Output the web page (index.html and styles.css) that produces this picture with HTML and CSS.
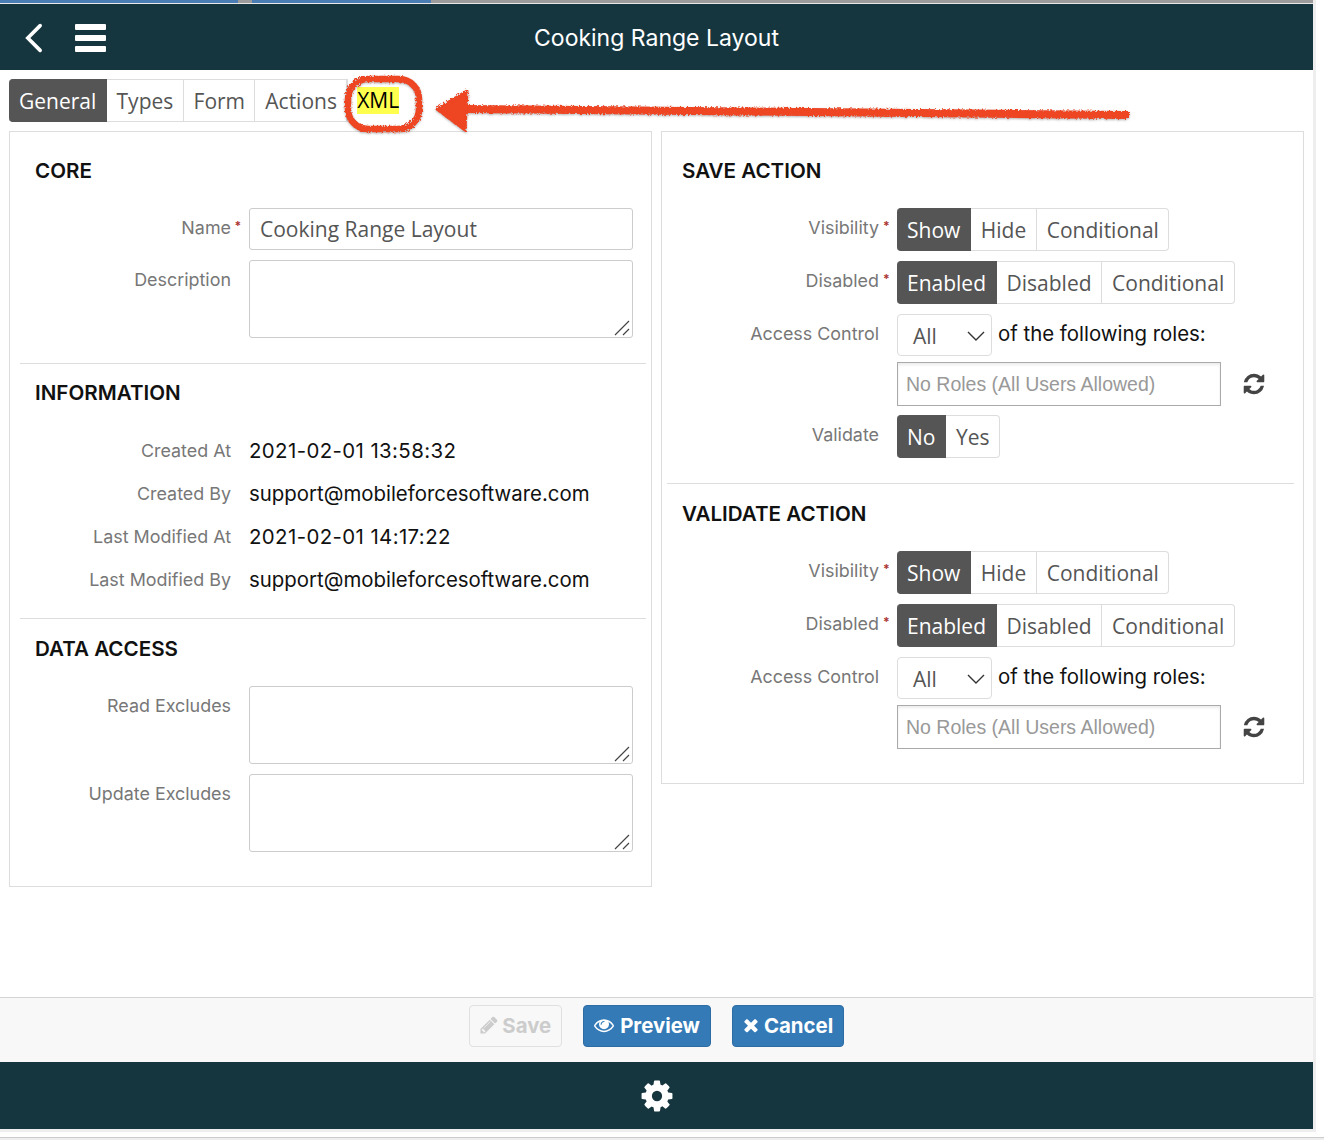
FILE: index.html
```html
<!DOCTYPE html>
<html lang="en">
<head>
    <meta charset="UTF-8">
    <title>Cooking Range Layout</title>
    <link rel="stylesheet" href="styles.css">
</head>
<body>
    <svg class="sprite" width="0" height="0">
        <defs>
            <symbol id="iconCog" viewBox="0 0 1792 1792"><path d="M1152 896q0-106-75-181t-181-75-181 75-75 181 75 181 181 75 181-75 75-181zm512-109v222q0 12-8 23t-20 13l-185 28q-19 54-39 91 35 50 107 138 10 12 10 25t-9 23q-27 37-99 108t-94 71q-12 0-26-9l-138-108q-44 23-91 38-16 136-29 186-7 28-36 28h-222q-14 0-24.500-8.500t-11.500-21.500l-28-184q-49-16-90-37l-141 107q-10 9-25 9-14 0-25-11-126-114-165-168-7-10-7-23 0-12 8-23 15-21 51-66.500t54-70.500q-27-50-41-99l-183-27q-13-2-21-12.500t-8-23.500v-222q0-12 8-23t19-13l186-28q14-46 39-92-40-57-107-138-10-12-10-24 0-10 9-23 26-36 98.500-107.500t94.500-71.500q13 0 26 10l138 107q44-23 91-38 16-136 29-186 7-28 36-28h222q14 0 24.500 8.500t11.500 21.500l28 184q49 16 90 37l142-107q9-9 24-9 13 0 25 10 129 119 165 170 7 8 7 22 0 12-8 23-15 21-51 66.500t-54 70.500q26 50 41 98l183 28q13 2 21 12.500t8 23.500z"/></symbol>
            <symbol id="iconRefresh" viewBox="0 0 1792 1792"><path d="M1639 1056q0 5-1 7-64 268-268 434.500t-478 166.500q-146 0-282.500-55t-243.500-157l-129 129q-19 19-45 19t-45-19-19-45v-448q0-26 19-45t45-19h448q26 0 45 19t19 45-19 45l-137 137q71 66 161 102t187 36q134 0 250-65t186-179q11-17 53-117 8-23 30-23h192q13 0 22.500 9.500t9.500 22.500zm25-800v448q0 26-19 45t-45 19h-448q-26 0-45-19t-19-45 19-45l138-138q-148-137-349-137-134 0-250 65t-186 179q-11 17-53 117-8 23-30 23h-199q-13 0-22.500-9.500t-9.500-22.500v-7q65-268 270-434.500t480-166.500q146 0 284 55.500t245 156.500l130-129q19-19 45-19t45 19 19 45z"/></symbol>
            <symbol id="iconPencil" viewBox="0 0 1792 1792"><path d="M491 1536l91-91-235-235-91 91v107h128v128h107zm523-928q0-22-22-22-10 0-17 7l-542 542q-7 7-7 17 0 22 22 22 10 0 17-7l542-542q7-7 7-17zm-54-192l416 416-832 832h-416v-416zm683 96q0 53-37 90l-166 166-416-416 166-165q36-38 90-38 53 0 91 38l235 234q37 39 37 91z"/></symbol>
            <symbol id="iconEye" viewBox="0 0 1792 1792"><path d="M1664 960q-152-236-381-353 61 104 61 225 0 185-131.500 316.500t-316.500 131.500-316.500-131.500-131.500-316.500q0-121 61-225-229 117-381 353 133 205 333.500 326.500t434.500 121.500 434.500-121.500 333.500-326.500zm-720-384q0-20-14-34t-34-14q-125 0-214.500 89.500t-89.500 214.500q0 20 14 34t34 14 34-14 14-34q0-86 61-147t147-61q20 0 34-14t14-34zm848 384q0 34-20 69-140 230-376.500 368.500t-499.500 138.500-499.500-139-376.500-368q-20-35-20-69t20-69q140-229 376.500-368t499.500-139 499.500 139 376.500 368q20 35 20 69z"/></symbol>
            <symbol id="iconTimes" viewBox="0 0 1792 1792"><path d="M1490 1322q0 40-28 68l-136 136q-28 28-68 28t-68-28l-294-294-294 294q-28 28-68 28t-68-28l-136-136q-28-28-28-68t28-68l294-294-294-294q-28-28-28-68t28-68l136-136q28-28 68-28t68 28l294 294 294-294q28-28 68-28t68 28l136 136q28 28 28 68t-28 68l-294 294 294 294q28 28 28 68z"/></symbol>
            <symbol id="iconChevron" viewBox="0 0 18 10"><path d="M1 1l8 8 8-8" fill="none" stroke="#333" stroke-width="1.4"/></symbol>
            <symbol id="iconGrip" viewBox="0 0 16 16"><path d="M1 15L15 1M9 15l6-6" fill="none" stroke="#444" stroke-width="1.2"/></symbol>
        </defs>
    </svg>

    <div class="app">
        <div class="browserStrip">
            <span class="stripTab stripTabFirst"></span>
            <span class="stripTab stripTabSecond"></span>
        </div>

        <!-- Top bar -->
        <header class="topBar">
            <div class="topBarIcons">
                <svg class="backIcon" viewBox="0 0 20 32"><path d="M17 3L4 16l13 13" fill="none" stroke="#fff" stroke-width="3.8" stroke-linecap="round"/></svg>
                <div class="burger"><span></span><span></span><span></span></div>
            </div>
            <h1 class="pageTitle">Cooking Range Layout</h1>
        </header>

        <!-- Tabs -->
        <nav class="tabs">
            <button type="button" class="tab tabActive">General</button>
            <button type="button" class="tab">Types</button>
            <button type="button" class="tab">Form</button>
            <button type="button" class="tab">Actions</button>
            <button type="button" class="tab tabXml"><mark class="xmlMark">XML</mark></button>
        </nav>

        <main class="columns">
            <!-- Left panel -->
            <div class="panel panelLeft">
                <section class="section sectionCore">
                    <h2 class="sectionTitle">CORE</h2>
                    <div class="row rowName">
                        <label class="rowLabel required">Name</label>
                        <input type="text" class="textField" value="Cooking Range Layout">
                    </div>
                    <div class="row">
                        <label class="rowLabel">Description</label>
                        <div class="areaWrap">
                            <textarea class="textArea"></textarea>
                            <svg class="areaGrip"><use href="#iconGrip"/></svg>
                        </div>
                    </div>
                </section>

                <section class="section sectionInfo">
                    <h2 class="sectionTitle">INFORMATION</h2>
                    <div class="row rowInfo">
                        <label class="rowLabel">Created At</label>
                        <span class="infoValue infoDate">2021-02-01 13:58:32</span>
                    </div>
                    <div class="row rowInfo">
                        <label class="rowLabel">Created By</label>
                        <span class="infoValue">support@mobileforcesoftware.com</span>
                    </div>
                    <div class="row rowInfo">
                        <label class="rowLabel">Last Modified At</label>
                        <span class="infoValue infoDate">2021-02-01 14:17:22</span>
                    </div>
                    <div class="row rowInfo">
                        <label class="rowLabel">Last Modified By</label>
                        <span class="infoValue">support@mobileforcesoftware.com</span>
                    </div>
                </section>

                <section class="section sectionData">
                    <h2 class="sectionTitle">DATA ACCESS</h2>
                    <div class="row rowArea">
                        <label class="rowLabel">Read Excludes</label>
                        <div class="areaWrap">
                            <textarea class="textArea"></textarea>
                            <svg class="areaGrip"><use href="#iconGrip"/></svg>
                        </div>
                    </div>
                    <div class="row">
                        <label class="rowLabel">Update Excludes</label>
                        <div class="areaWrap">
                            <textarea class="textArea"></textarea>
                            <svg class="areaGrip"><use href="#iconGrip"/></svg>
                        </div>
                    </div>
                </section>
            </div>

            <!-- Right panel -->
            <div class="panel panelRight">
                <section class="section sectionCore sectionSave">
                    <h2 class="sectionTitle">SAVE ACTION</h2>
                    <div class="row rowButtons">
                        <label class="rowLabel required">Visibility</label>
                        <div class="btnGroup">
                            <button type="button" class="groupBtn groupBtnOn">Show</button>
                            <button type="button" class="groupBtn">Hide</button>
                            <button type="button" class="groupBtn">Conditional</button>
                        </div>
                    </div>
                    <div class="row rowButtons">
                        <label class="rowLabel required">Disabled</label>
                        <div class="btnGroup">
                            <button type="button" class="groupBtn groupBtnOn">Enabled</button>
                            <button type="button" class="groupBtn">Disabled</button>
                            <button type="button" class="groupBtn">Conditional</button>
                        </div>
                    </div>
                    <div class="row rowAccess">
                        <label class="rowLabel">Access Control</label>
                        <div class="selectBox">All<svg class="selectChevron"><use href="#iconChevron"/></svg></div>
                        <span class="accessText">of the following roles:</span>
                    </div>
                    <div class="row rowRoles">
                        <span class="rowLabel"></span>
                        <input type="text" class="rolesField" placeholder="No Roles (All Users Allowed)">
                        <svg class="refreshIcon"><use href="#iconRefresh"/></svg>
                    </div>
                    <div class="row">
                        <label class="rowLabel">Validate</label>
                        <div class="btnGroup">
                            <button type="button" class="groupBtn groupBtnOn">No</button>
                            <button type="button" class="groupBtn">Yes</button>
                        </div>
                    </div>
                </section>

                <section class="section sectionValidate">
                    <h2 class="sectionTitle">VALIDATE ACTION</h2>
                    <div class="row rowButtons">
                        <label class="rowLabel required">Visibility</label>
                        <div class="btnGroup">
                            <button type="button" class="groupBtn groupBtnOn">Show</button>
                            <button type="button" class="groupBtn">Hide</button>
                            <button type="button" class="groupBtn">Conditional</button>
                        </div>
                    </div>
                    <div class="row rowButtons">
                        <label class="rowLabel required">Disabled</label>
                        <div class="btnGroup">
                            <button type="button" class="groupBtn groupBtnOn">Enabled</button>
                            <button type="button" class="groupBtn">Disabled</button>
                            <button type="button" class="groupBtn">Conditional</button>
                        </div>
                    </div>
                    <div class="row rowAccess">
                        <label class="rowLabel">Access Control</label>
                        <div class="selectBox">All<svg class="selectChevron"><use href="#iconChevron"/></svg></div>
                        <span class="accessText">of the following roles:</span>
                    </div>
                    <div class="row">
                        <span class="rowLabel"></span>
                        <input type="text" class="rolesField" placeholder="No Roles (All Users Allowed)">
                        <svg class="refreshIcon"><use href="#iconRefresh"/></svg>
                    </div>
                </section>
            </div>
        </main>

        <!-- Save / Preview / Cancel -->
        <div class="actionBar">
            <button type="button" class="actionBtn actionBtnOff"><svg class="btnIcon"><use href="#iconPencil"/></svg>Save</button>
            <button type="button" class="actionBtn actionBtnPreview"><svg class="btnIcon"><use href="#iconEye"/></svg>Preview</button>
            <button type="button" class="actionBtn actionBtnCancel"><svg class="btnIcon"><use href="#iconTimes"/></svg>Cancel</button>
        </div>

        <footer class="bottomBar">
            <svg class="cogIcon"><use href="#iconCog"/></svg>
        </footer>
    </div>

    <div class="belowApp"></div>

    <!-- Hand drawn markup on top of the screenshot -->
    <svg class="scribble" width="1324" height="1140" viewBox="0 0 1324 1140">
        <defs>
            <filter id="rough" x="-5%" y="-40%" width="110%" height="180%">
                <feTurbulence type="fractalNoise" baseFrequency="0.55" numOctaves="2" seed="7"/>
                <feDisplacementMap in="SourceGraphic" scale="4"/>
            </filter>
        </defs>
        <g filter="url(#rough)" fill="#ee4423" stroke="#ee4423">
            <rect x="348" y="79" width="71" height="50" rx="20" fill="none" stroke-width="6.500"/>
            <path d="M466 109L1129 115" fill="none" stroke-width="8"/>
            <path d="M437 109L467 91 465 130z" stroke-width="3" stroke-linejoin="round"/>
        </g>
    </svg>
</body>
</html>
```

FILE: styles.css
```css
* {
    box-sizing: border-box;
}

body {
    margin: 0;
    background-color: #fff;
    font-family: "Open Sans", sans-serif;
    color: #555;
}

.sprite {
    position: absolute;
}

.app {
    width: 1316px;
    height: 1132px;
    border-right: 3px solid #eee;
    border-bottom: 3px solid #eee;
    display: flex;
    flex-direction: column;
}

.browserStrip {
    height: 4px;
    flex: none;
    display: flex;
    background-color: #9c9c9c;
    border-bottom: 1px solid #e8e8e8;
}

.stripTab {
    display: block;
    height: 3px;
    background-color: #4a7db4;
}

.stripTabFirst {
    width: 238px;
    margin-right: 14px;
}

.stripTabSecond {
    width: 179px;
}

/* Top bar */
.topBar {
    height: 66px;
    flex: none;
    position: relative;
    display: flex;
    align-items: center;
    justify-content: center;
    padding-top: 2px;
    background-color: #16363f;
    color: #fff;
}

.topBarIcons {
    position: absolute;
    left: 24px;
    top: 18px;
    display: flex;
    align-items: center;
    gap: 32px;
}

.backIcon {
    width: 19px;
    height: 32px;
}

.burger {
    width: 31px;
    display: flex;
    flex-direction: column;
    gap: 5px;
}

.burger span {
    display: block;
    height: 6px;
    border-radius: 1px;
    background-color: #fff;
}

.pageTitle {
    margin: 0;
    font-family: Inter, sans-serif;
    font-size: 23px;
    font-weight: 400;
}

/* Tabs */
.tabs {
    display: flex;
    flex: none;
    height: 43px;
    margin: 9px 0 9px 9px;
}

.tab {
    height: 43px;
    padding: 0 9.250px 0 10px;
    border: 1px solid #ddd;
    border-left: 0;
    background-color: #fff;
    color: #555;
    font-family: "Open Sans", sans-serif;
    font-size: 21px;
}

.tabActive {
    background-color: #555;
    border-color: #555;
    color: #fff;
    border-radius: 4px 0 0 4px;
}

.tabXml {
    border: 0;
    border-left: 1px solid #ddd;
    padding: 0 9px;
}

.xmlMark {
    display: block;
    background-color: #ffff4d;
    color: #000;
    line-height: 27px;
}

/* Panels */
.columns {
    display: flex;
    align-items: flex-start;
    gap: 9px;
    margin-left: 9px;
    flex: 1;
}

.panel {
    width: 643px;
    padding: 0 5px 0 10px;
    border: 1px solid #ddd;
}

.panelLeft {
    padding-bottom: 34px;
}

.panelRight {
    padding: 0 9px 34px 5px;
}

.section {
    padding: 17px 0 0 15px;
    border-top: 1px solid #ddd;
}

.section:first-child {
    border-top: 0;
}

.sectionCore {
    padding-top: 27px;
    padding-bottom: 25px;
}

.sectionInfo {
    padding-bottom: 17px;
}

.sectionData {
    padding-top: 18px;
}

.sectionSave {
    padding-bottom: 25px;
}

.sectionValidate {
    padding-top: 18px;
}

.sectionTitle {
    margin: 0 0 25px;
    font-family: Inter, sans-serif;
    font-size: 20.600px;
    font-weight: 600;
    line-height: 24px;
    color: #111;
}

.sectionInfo .sectionTitle {
    margin-bottom: 24px;
}

/* Form rows */
.row {
    display: flex;
    align-items: flex-start;
}

.rowName,
.rowArea {
    margin-bottom: 10px;
}

.rowButtons {
    margin-bottom: 10px;
}

.rowAccess {
    margin-bottom: 6px;
}

.rowRoles {
    margin-bottom: 9px;
}

.rowInfo {
    height: 43px;
    align-items: center;
}

.rowLabel {
    flex: none;
    width: 197px;
    margin-right: 18px;
    position: relative;
    padding-top: 7.500px;
    text-align: right;
    font-family: Inter, sans-serif;
    font-size: 17.900px;
    line-height: 24px;
    color: #777;
}

.panelLeft .rowLabel {
    width: 196px;
}

.rowInfo .rowLabel {
    padding-top: 0;
}

.required::after {
    content: "*";
    position: absolute;
    left: 201px;
    top: 6px;
    color: #a33;
    font-size: 12px;
    font-weight: 700;
}

.panelLeft .required::after {
    left: 199.500px;
}

.infoValue {
    font-family: Inter, sans-serif;
    font-size: 20.400px;
    color: #111;
}

.infoDate {
    letter-spacing: 0.400px;
}

.textField,
.textArea {
    display: block;
    width: 384px;
    border: 1px solid #ccc;
    border-radius: 3px;
    font-family: "Open Sans", sans-serif;
    font-size: 21px;
    color: #555;
    outline: none;
}

.textField {
    height: 42px;
    padding: 0 10px;
}

.areaWrap {
    position: relative;
}

.textArea {
    height: 78px;
    resize: none;
}

.areaGrip {
    position: absolute;
    right: 3px;
    bottom: 2px;
    width: 16px;
    height: 16px;
}

/* Button groups */
.btnGroup {
    display: flex;
}

.groupBtn {
    height: 43px;
    padding: 0 9.500px 0 10px;
    border: 1px solid #ddd;
    border-left: 0;
    background-color: #fff;
    color: #555;
    font-family: "Open Sans", sans-serif;
    font-size: 21px;
}

.groupBtn:first-child {
    border-radius: 4px 0 0 4px;
}

.groupBtn:last-child {
    border-radius: 0 4px 4px 0;
}

.groupBtnOn {
    background-color: #555;
    border-color: #555;
    color: #fff;
}

.selectBox {
    position: relative;
    width: 95px;
    height: 42px;
    padding-left: 15px;
    border: 1px solid #ddd;
    border-radius: 4px;
    font-size: 21px;
    line-height: 42px;
    color: #555;
}

.selectChevron {
    position: absolute;
    right: 6px;
    top: 16px;
    width: 18px;
    height: 10px;
}

.accessText {
    margin-left: 6px;
    font-family: Inter, sans-serif;
    font-size: 20.400px;
    line-height: 40px;
    color: #111;
}

.rolesField {
    display: block;
    width: 324px;
    height: 44px;
    padding: 0 8px;
    border: 1px solid #aaa;
    box-shadow: inset 0 2px 3px rgba(0, 0, 0, 0.08);
    font-family: "Liberation Sans", sans-serif;
    font-size: 19.500px;
    outline: none;
}

.rolesField::placeholder {
    color: #999;
}

.refreshIcon {
    flex: none;
    width: 24px;
    height: 24px;
    margin: 10px 0 0 21px;
    fill: #444;
}

/* Action bar */
.actionBar {
    height: 65px;
    flex: none;
    display: flex;
    justify-content: center;
    gap: 21px;
    padding-top: 7px;
    background-color: #f8f8f8;
    border-top: 1px solid #d4d4d4;
}

.actionBtn {
    height: 42px;
    padding: 0 10px 2px;
    display: flex;
    align-items: center;
    gap: 3px;
    border: 1px solid #2e6da4;
    border-radius: 4px;
    background-color: #337ab7;
    color: #fff;
    font-family: Inter, sans-serif;
    font-size: 20.400px;
    font-weight: 700;
}

.actionBtnOff {
    padding-left: 9px;
    gap: 3.500px;
    background-color: #f8f8f8;
    border-color: #e0e0e0;
    color: #ccc;
}

.actionBtnPreview {
    gap: 6px;
}

.actionBtnCancel {
    padding-left: 8px;
}

.btnIcon {
    width: 20px;
    height: 20px;
    fill: currentColor;
}

.bottomBar {
    height: 67px;
    flex: none;
    display: flex;
    align-items: center;
    justify-content: center;
    background-color: #16363f;
}

.cogIcon {
    width: 36px;
    height: 36px;
    fill: #fff;
}

.belowApp {
    height: 3px;
    margin-top: 5px;
    background-color: #eee;
    border-top: 1px solid #ccc;
}

/* Red pen markup */
.scribble {
    position: absolute;
    left: 0;
    top: 0;
    pointer-events: none;
    filter: drop-shadow(0 1px 1px rgba(0, 0, 0, 0.3));
}
```
